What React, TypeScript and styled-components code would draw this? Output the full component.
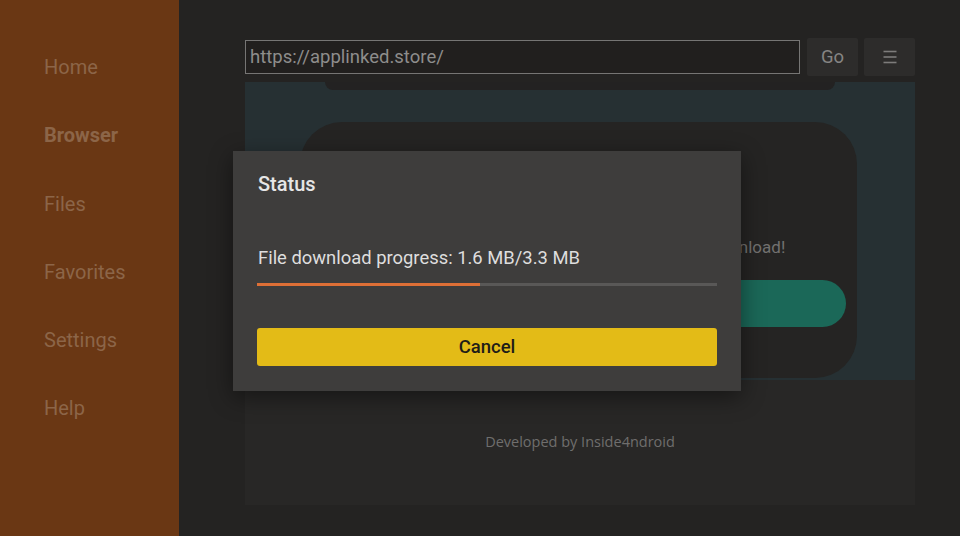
import React from "react";
import styled, { createGlobalStyle } from "styled-components";

const Global = createGlobalStyle`
  html, body { margin: 0; padding: 0; background: #232322; }
  body { font-family: Roboto, "Liberation Sans", sans-serif; }
  #root { width: 960px; height: 536px; overflow: hidden; }
`;

const Screen = styled.div`
  position: relative;
  display: flex;
  width: 960px;
  height: 536px;
  background: #242322;
`;

const Sidebar = styled.nav`
  width: 179px;
  flex: none;
  background: #6a3714;
  display: flex;
  flex-direction: column;
  padding-top: 52px;
  box-sizing: border-box;
`;

const NavItem = styled.div<{ $active?: boolean }>`
  height: 68.3px;
  padding-left: 44px;
  font-size: 20px;
  line-height: 30px;
  color: #8c6548;
  font-weight: ${(p) => (p.$active ? 700 : 400)};
`;

const Main = styled.main`
  flex: 1;
  display: flex;
  flex-direction: column;
  padding: 38px 45px 0 66px;
  box-sizing: border-box;
`;

const Toolbar = styled.div`
  display: flex;
  align-items: flex-start;
  height: 38px;
`;

const UrlField = styled.div`
  flex: 1;
  height: 34px;
  margin-top: 2px;
  box-sizing: border-box;
  border: 1px solid #767574;
  background: #211f1e;
  padding-left: 4px;
  font-size: 18.5px;
  line-height: 33px;
  color: #8e8d8c;
`;

const ToolButton = styled.div<{ $gap: number }>`
  width: 51px;
  height: 38px;
  margin-left: ${(p) => p.$gap}px;
  background: #2d2c2b;
  border-radius: 2px;
  display: flex;
  align-items: center;
  justify-content: center;
  font-size: 18.5px;
  color: #858483;
`;

const WebView = styled.div`
  margin-top: 6px;
  height: 423px;
  display: flex;
  flex-direction: column;
`;

const Hero = styled.div`
  height: 298px;
  background: #263033;
  display: flex;
  flex-direction: column;
  align-items: flex-start;
`;

const TopTab = styled.div`
  margin-left: 80px;
  width: 510px;
  height: 8px;
  background: #232222;
  border-radius: 0 0 30px 30px;
`;

const Card = styled.div`
  margin-top: 32px;
  margin-left: 55px;
  width: 557px;
  height: 256px;
  background: #252423;
  border-radius: 42px;
  display: flex;
  flex-direction: column;
  align-items: center;
  padding: 0 11px;
  box-sizing: border-box;
`;

const CardText = styled.div`
  margin-top: 112px;
  font-size: 17px;
  line-height: 26px;
  color: #727170;
  white-space: nowrap;
`;

const PillButton = styled.div`
  margin-top: 20px;
  width: 100%;
  height: 47px;
  border-radius: 24px;
  background: #1b6858;
`;

const Footer = styled.div`
  flex: 1;
  background: #282726;
  display: flex;
  justify-content: center;
  padding-top: 52px;
  box-sizing: border-box;
  font-family: "Open Sans", "Liberation Sans", sans-serif;
  font-size: 14.5px;
  color: #6f6e6d;
`;

const FooterText = styled.div`
  line-height: 20px;
`;

const Dialog = styled.div`
  position: absolute;
  left: 233px;
  top: 151px;
  width: 508px;
  height: 240px;
  background: #3e3d3c;
  box-shadow: 0 6px 22px rgba(0, 0, 0, 0.45);
  padding: 20px 24px 0 24px;
  box-sizing: border-box;
  display: flex;
  flex-direction: column;
`;

const DialogTitle = styled.div`
  font-size: 20px;
  line-height: 26px;
  font-weight: 500;
  color: #e6e6e6;
  padding-left: 1px;
`;

const ProgressLabel = styled.div`
  margin-top: 49px;
  font-size: 18.4px;
  line-height: 24px;
  color: #dedede;
  padding-left: 1px;
`;

const Track = styled.div`
  margin-top: 13px;
  height: 3px;
  background: #595857;
  display: flex;
`;

const Fill = styled.div`
  height: 100%;
  background: #dd6f36;
`;

const CancelButton = styled.div`
  margin-top: 42px;
  height: 38px;
  border-radius: 3px;
  background: #e3bb17;
  display: flex;
  align-items: center;
  justify-content: center;
  font-size: 18.5px;
  font-weight: 500;
  color: #1f1d18;
`;

const MenuIcon = () => (
  <svg width="14" height="14" viewBox="0 0 14 14">
    <g stroke="#7d7c7b" strokeWidth="1.6">
      <line x1="0.5" y1="1.5" x2="13.5" y2="1.5" />
      <line x1="0.5" y1="7" x2="13.5" y2="7" />
      <line x1="0.5" y1="12.5" x2="13.5" y2="12.5" />
    </g>
  </svg>
);

const navItems = ["Home", "Browser", "Files", "Favorites", "Settings", "Help"];

export default function App() {
  const progress = 1.6 / 3.3;
  return (
    <>
      <Global />
      <Screen>
        <Sidebar>
          {navItems.map((n) => (
            <NavItem key={n} $active={n === "Browser"}>
              {n}
            </NavItem>
          ))}
        </Sidebar>
        <Main>
          <Toolbar>
            <UrlField>https://applinked.store/</UrlField>
            <ToolButton $gap={7}>Go</ToolButton>
            <ToolButton $gap={6}>
              <MenuIcon />
            </ToolButton>
          </Toolbar>
          <WebView>
            <Hero>
              <TopTab />
              <Card>
                <CardText>Please click on the button below to start the download!</CardText>
                <PillButton />
              </Card>
            </Hero>
            <Footer>
              <FooterText>Developed by Inside4ndroid</FooterText>
            </Footer>
          </WebView>
        </Main>
        <Dialog>
          <DialogTitle>Status</DialogTitle>
          <ProgressLabel>File download progress: 1.6 MB/3.3 MB</ProgressLabel>
          <Track>
            <Fill style={{ width: `${progress * 100}%` }} />
          </Track>
          <CancelButton>Cancel</CancelButton>
        </Dialog>
      </Screen>
    </>
  );
}
